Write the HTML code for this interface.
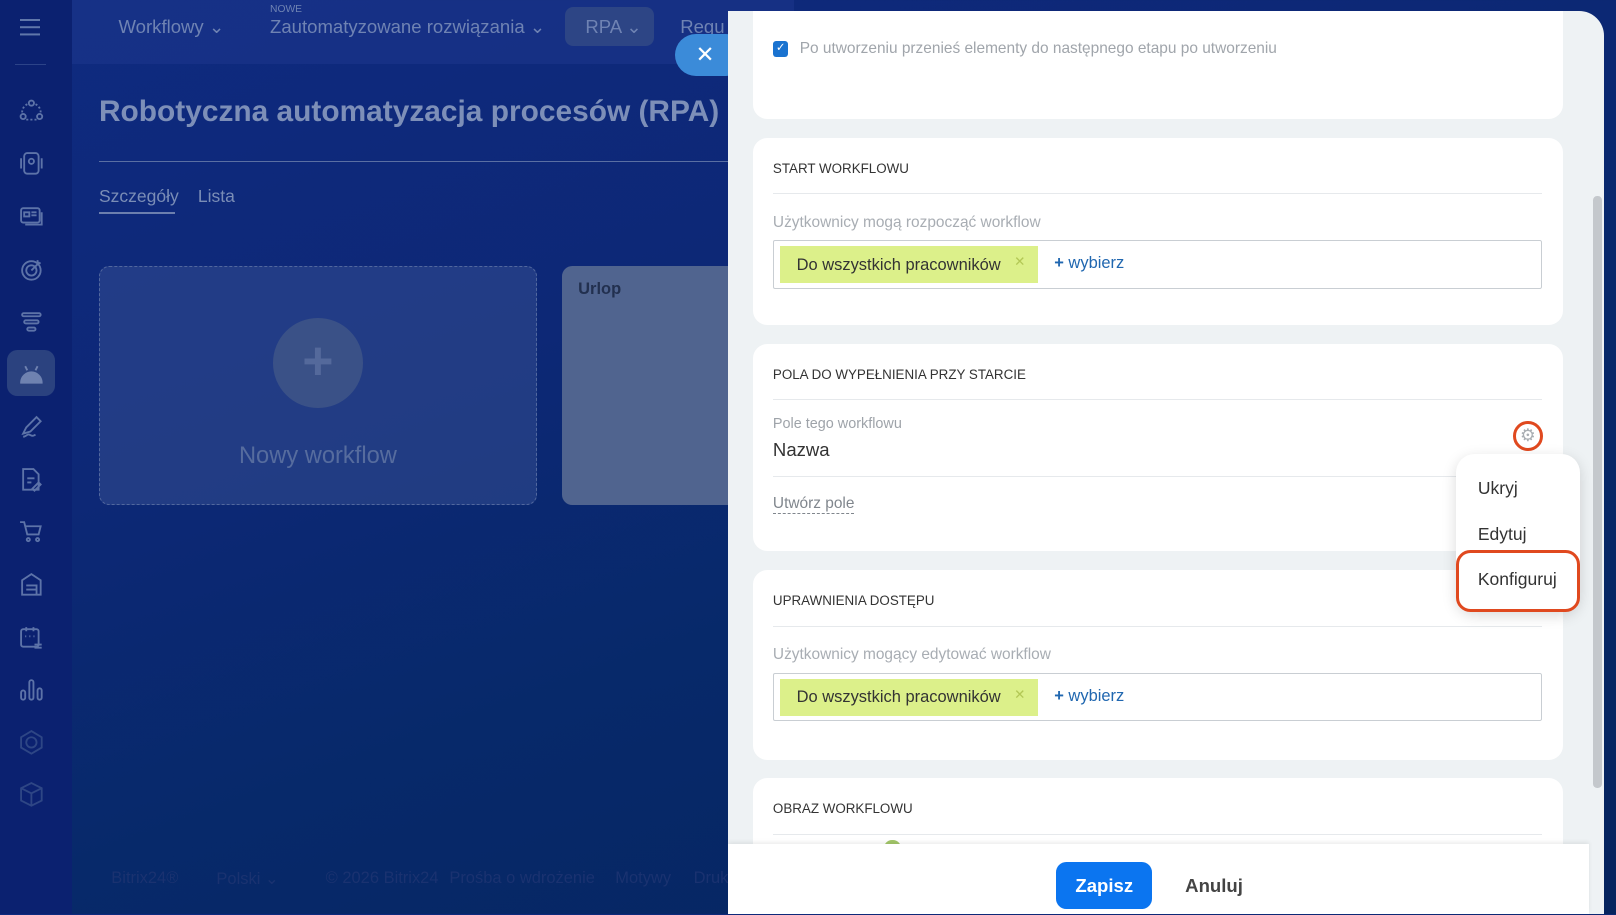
<!DOCTYPE html>
<html><head><meta charset="utf-8">
<style>
html{zoom:1.0306;overflow:hidden}
*{box-sizing:border-box;margin:0;padding:0}
body{width:1568px;height:887px;overflow:hidden;position:relative;font-family:"Liberation Sans",sans-serif;
background:linear-gradient(160deg,#0f2a80 0%,#0d2876 35%,#07296a 60%,#06245e 100%);}
.side{position:absolute;left:0;top:0;width:70px;height:887px;background:#0b2170;}
.side svg{position:absolute;left:17px;width:26px;height:26px;stroke:#5d73a8;fill:none;stroke-width:1.8}
.hdr{position:absolute;left:70px;top:0;width:700px;height:62px;background:rgba(30,55,140,.55)}
.nav{position:absolute;top:16px;font-size:18px;color:#6f83b3}
.title{position:absolute;left:96px;top:92px;font-size:29px;font-weight:bold;color:#7d8fb8}
.line{position:absolute;left:96px;top:156px;width:610px;height:1px;background:#5a6fa3}
.card{position:absolute;top:258px;height:232px;border-radius:10px}
.panel{position:absolute;left:706px;top:11px;width:850px;height:876px;background:#eef2f4;border-radius:0 24px 0 0;overflow:hidden}
.box{position:absolute;left:25px;width:786px;background:#fff;border-radius:14px}
.h{position:absolute;left:19px;font-size:13px;color:#333;text-transform:uppercase}
.sep{position:absolute;left:19px;right:21px;height:1px;background:#e6e9ec}
.lbl{position:absolute;left:19px;font-size:15px;color:#a8adb3}
.inp{position:absolute;left:19px;right:21px;height:47px;border:1px solid #c9ced3;border-radius:2px}
.tag{position:absolute;left:6px;top:5px;height:36px;width:250px;background:#dcf08a;font-size:16px;color:#333;padding:9px 0 0 16px}
.tag i{position:absolute;right:12px;top:8px;font-style:normal;color:#b3c855;font-size:13px}
.add{position:absolute;left:272px;top:13px;font-size:16px;color:#2067b0}
.ft{position:absolute;top:843px;font-size:16px;color:#1a3270}
</style></head><body>
<div class="side">
<div style="position:absolute;left:19px;top:18px;width:20px;height:2px;background:#6077aa;box-shadow:0 7px 0 #6077aa,0 14px 0 #6077aa"></div>
<div style="position:absolute;left:15px;top:62px;width:30px;height:1px;background:#2c4388"></div>
<svg style="top:95px" viewBox="0 0 26 26"><circle cx="13" cy="5" r="2.5"/><circle cx="5" cy="18" r="2.5"/><circle cx="21" cy="18" r="2.5"/><path d="M9 6a9 9 0 0 0-5 8M17 6a9 9 0 0 1 5 8M8 21h10" stroke-dasharray="2 2"/></svg>
<svg style="top:146px" viewBox="0 0 26 26"><rect x="6" y="3" width="14" height="20" rx="3"/><circle cx="13" cy="11" r="2.5"/><path d="M3 8v10M23 8v10"/></svg>
<svg style="top:197px" viewBox="0 0 26 26"><rect x="3" y="5" width="18" height="14" rx="2"/><path d="M6 9h5v4H6zM13 9h5M13 12h5M23 9v12H7"/></svg>
<svg style="top:248px" viewBox="0 0 26 26"><circle cx="13" cy="14" r="9"/><circle cx="13" cy="14" r="5"/><path d="M13 14l8-8M19 4v3h3"/></svg>
<svg style="top:299px" viewBox="0 0 26 26"><rect x="4" y="5" width="18" height="3" rx="1.5"/><rect x="6" y="12" width="14" height="3" rx="1.5"/><rect x="9" y="19" width="8" height="3" rx="1.5"/></svg>
<div style="position:absolute;left:7px;top:340px;width:46px;height:44px;border-radius:10px;background:#2b427f"></div>
<svg style="top:349px;fill:#6f82b0;stroke:#6f82b0" viewBox="0 0 26 26"><path d="M3 22a10 10 0 0 1 20 0z"/><path d="M7 6l2 4M19 6l-2 4" fill="none"/></svg>
<svg style="top:401px" viewBox="0 0 26 26"><path d="M5 20l3-6L18 4l4 4-10 10-7 2zM5 23c3 0 4-3 6-2s3 2 6 0"/></svg>
<svg style="top:452px" viewBox="0 0 26 26"><path d="M5 3h10l5 5v15H5z"/><path d="M9 12h7M9 16h4M14 22l6-6 2 2-6 6z"/></svg>
<svg style="top:503px" viewBox="0 0 26 26"><path d="M2 4h4l3 12h11l2-8H7"/><circle cx="10" cy="21" r="1.5"/><circle cx="19" cy="21" r="1.5"/></svg>
<svg style="top:554px" viewBox="0 0 26 26"><path d="M4 23V9l9-6 9 6v14zM8 14h10v9M8 18h10"/></svg>
<svg style="top:605px" viewBox="0 0 26 26"><rect x="3" y="5" width="17" height="17" rx="2"/><path d="M8 3v4M15 3v4M7 12h1M11 12h1M15 12h1M16 20h7M16 23h7"/></svg>
<svg style="top:656px" viewBox="0 0 26 26"><rect x="3" y="14" width="4" height="9" rx="2"/><rect x="11" y="4" width="4" height="19" rx="2"/><rect x="19" y="12" width="4" height="11" rx="2"/></svg>
<svg style="top:707px;stroke:#2e4685" viewBox="0 0 26 26"><path d="M13 2l10 6v10l-10 6-10-6V8z"/><circle cx="13" cy="13" r="5"/></svg>
<svg style="top:758px;stroke:#2e4685" viewBox="0 0 26 26"><path d="M13 2l10 5v12l-10 5-10-5V7zM3 7l10 5 10-5M13 12v12"/></svg>
</div>
<div class="hdr"></div>
<div class="nav" style="left:115px">Workflowy ⌄</div>
<div style="position:absolute;left:262px;top:4px;font-size:10px;color:#6f83b3">NOWE</div>
<div class="nav" style="left:262px">Zautomatyzowane rozwiązania ⌄</div>
<div style="position:absolute;left:548px;top:7px;width:87px;height:38px;border-radius:8px;background:#2d4585"></div>
<div class="nav" style="left:568px">RPA ⌄</div>
<div class="nav" style="left:660px">Regu</div>
<div class="title">Robotyczna automatyzacja procesów (RPA)</div>
<div class="line"></div>
<div style="position:absolute;left:96px;top:180px;font-size:17px;color:#7a8db6">Szczegóły</div>
<div style="position:absolute;left:96px;top:206px;width:74px;height:2px;background:#6c7fae"></div>
<div style="position:absolute;left:192px;top:180px;font-size:17px;color:#7a8db6">Lista</div>
<div class="card" style="left:96px;width:425px;background:rgba(60,85,150,.45);border:1px dashed #52689e"></div>
<div style="position:absolute;left:265px;top:309px;width:87px;height:87px;border-radius:50%;background:#3a5187;color:#54699b;font-size:52px;font-weight:bold;text-align:center;line-height:84px">+</div>
<div style="position:absolute;left:96px;top:430px;width:425px;text-align:center;font-size:23px;color:#566c9e">Nowy workflow</div>
<div class="card" style="left:545px;width:180px;background:#50648f"></div>
<div style="position:absolute;left:561px;top:272px;font-size:16px;font-weight:bold;color:#22304f">Urlop</div>
<div class="ft" style="left:108px">Bitrix24®</div>
<div class="ft" style="left:210px">Polski ⌄</div>
<div class="ft" style="left:316px">© 2026 Bitrix24</div>
<div class="ft" style="left:436px">Prośba o wdrożenie</div>
<div class="ft" style="left:597px">Motywy</div>
<div class="ft" style="left:673px">Druk</div>
<div style="position:absolute;left:655px;top:33px;width:70px;height:41px;border-radius:21px;background:#3b8bd9;color:#fff;font-size:22px;padding:7px 0 0 20px">✕</div>
<div class="panel">
 <div class="box" style="top:0;height:104px;border-radius:0 0 14px 14px">
  <div style="position:absolute;left:19px;top:29px;width:15px;height:15px;border-radius:3px;background:#1a73d0;color:#fff;font-size:11px;text-align:center;line-height:15px">✓</div>
  <div style="position:absolute;left:45px;top:28px;font-size:15px;color:#a0a5ab">Po utworzeniu przenieś elementy do następnego etapu po utworzeniu</div>
 </div>
 <div class="box" style="top:123px;height:181px">
  <div class="h" style="top:22px">Start workflowu</div><div class="sep" style="top:53px"></div>
  <div class="lbl" style="top:74px">Użytkownicy mogą rozpocząć workflow</div>
  <div class="inp" style="top:99px"><div class="tag">Do wszystkich pracowników<i>✕</i></div><div class="add"><b>+</b> wybierz</div></div>
 </div>
 <div class="box" style="top:323px;height:201px">
  <div class="h" style="top:22px">Pola do wypełnienia przy starcie</div><div class="sep" style="top:53px"></div>
  <div style="position:absolute;left:19px;top:70px;font-size:14px;color:#9ea3a9">Pole tego workflowu</div>
  <div style="position:absolute;left:19px;top:92px;font-size:18px;color:#333">Nazwa</div>
  <div class="sep" style="top:128px"></div>
  <div style="position:absolute;left:19px;top:146px;font-size:15px;color:#80868d;border-bottom:1px dashed #80868d">Utwórz pole</div>
  <div style="position:absolute;left:737px;top:75px;width:29px;height:29px;border:3px solid #e0491f;border-radius:50%;color:#a9aeb3;font-size:17px;text-align:center;line-height:22px">⚙</div>
 </div>
 <div class="box" style="top:542px;height:184px">
  <div class="h" style="top:22px">Uprawnienia dostępu</div><div class="sep" style="top:54px"></div>
  <div class="lbl" style="top:74px">Użytkownicy mogący edytować workflow</div>
  <div class="inp" style="top:100px"><div class="tag">Do wszystkich pracowników<i>✕</i></div><div class="add"><b>+</b> wybierz</div></div>
 </div>
 <div class="box" style="top:744px;height:132px;border-radius:14px 14px 0 0">
  <div class="h" style="top:22px">Obraz workflowu</div><div class="sep" style="top:54px"></div>
  <div style="position:absolute;left:127px;top:60px;width:16px;height:16px;border-radius:50%;background:#a3c76a"></div>
 </div>
 <div style="position:absolute;left:840px;top:179px;width:8px;height:575px;background:#c4c8cc;border-radius:4px"></div>
 <div style="position:absolute;left:0;top:808px;width:836px;height:68px;background:#fff;box-shadow:0 -2px 4px rgba(0,0,0,.08)"></div>
 <div style="position:absolute;left:319px;top:825px;width:93px;height:46px;border-radius:10px;background:#0b75f0;color:#fff;font-size:18px;font-weight:bold;text-align:center;line-height:46px">Zapisz</div>
 <div style="position:absolute;left:444px;top:838px;font-size:18px;font-weight:bold;color:#444">Anuluj</div>
</div>
<div style="position:absolute;left:1413px;top:441px;width:120px;height:152px;background:#fff;border-radius:18px;box-shadow:0 4px 14px rgba(0,0,0,.15)">
 <div style="position:absolute;left:21px;top:23px;font-size:17px;color:#333">Ukryj</div>
 <div style="position:absolute;left:21px;top:67px;font-size:17px;color:#333">Edytuj</div>
 <div style="position:absolute;left:0;top:93px;width:120px;height:60px;border:3px solid #e0491f;border-radius:14px"></div>
 <div style="position:absolute;left:21px;top:111px;font-size:17px;color:#333">Konfiguruj</div>
</div>
</body></html>
